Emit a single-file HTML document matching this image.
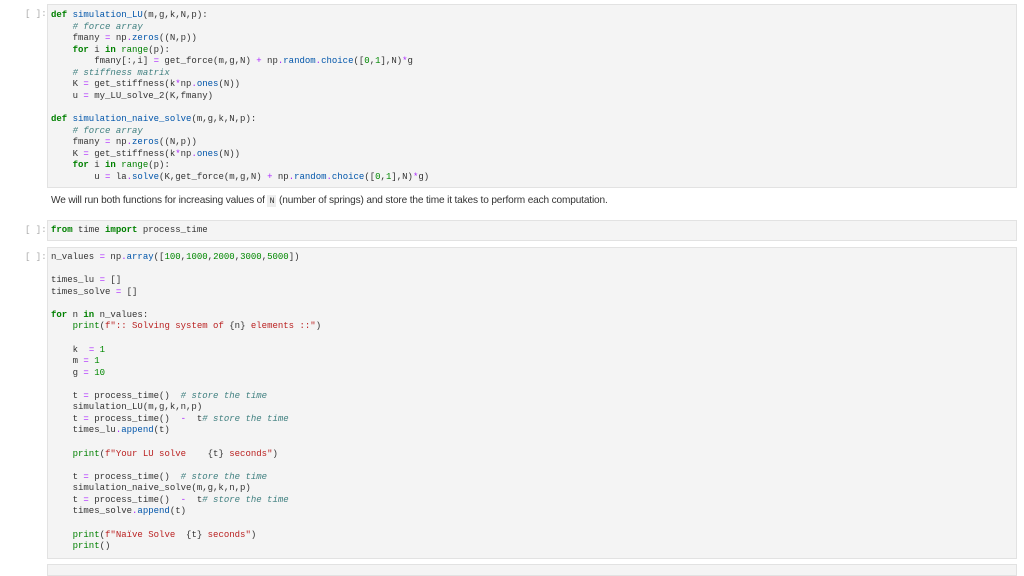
<!DOCTYPE html>
<html><head><meta charset="utf-8"><style>
body{margin:0;width:1024px;height:566px;background:#fff;position:relative;overflow:hidden;font-family:"Liberation Sans",sans-serif}
.cell{position:absolute;left:47px;width:968px;background:#f4f4f4;border:1px solid #e2e2e2}
.pr{position:absolute;left:25px;font:9px/11.57px "Liberation Mono",monospace;color:#aaa}
pre{margin:0;position:absolute;left:3px;font:9px/11.57px "Liberation Mono",monospace;color:#333}
.k{color:#008000;font-weight:bold}.c{color:#408080;font-style:italic}.o{color:#aa22ff}.p{color:#0055aa}.s{color:#ba2121}.n{color:#008800}.b{color:#008000}
.md{position:absolute;left:51px;top:195px;font-size:10.1px;color:#333;letter-spacing:-0.15px}
.md code{font:8.5px "Liberation Mono",monospace;background:#eee;padding:1px 2px}
</style></head><body>
<div class="pr" style="top:9px">[ ]:</div>
<div class="cell" style="top:4px;height:182px"><pre style="top:5px"><span class="k">def</span> <span class="p">simulation_LU</span>(m,g,k,N,p):
    <span class="c"># force array</span>
    fmany <span class="o">=</span> np<span class="o">.</span><span class="p">zeros</span>((N,p))
    <span class="k">for</span> i <span class="k">in</span> <span class="b">range</span>(p):
        fmany[:,i] <span class="o">=</span> get_force(m,g,N) <span class="o">+</span> np<span class="o">.</span><span class="p">random</span><span class="o">.</span><span class="p">choice</span>([<span class="n">0</span>,<span class="n">1</span>],N)<span class="o">*</span>g
    <span class="c"># stiffness matrix</span>
    K <span class="o">=</span> get_stiffness(k<span class="o">*</span>np<span class="o">.</span><span class="p">ones</span>(N))
    u <span class="o">=</span> my_LU_solve_2(K,fmany)

<span class="k">def</span> <span class="p">simulation_naive_solve</span>(m,g,k,N,p):
    <span class="c"># force array</span>
    fmany <span class="o">=</span> np<span class="o">.</span><span class="p">zeros</span>((N,p))
    K <span class="o">=</span> get_stiffness(k<span class="o">*</span>np<span class="o">.</span><span class="p">ones</span>(N))
    <span class="k">for</span> i <span class="k">in</span> <span class="b">range</span>(p):
        u <span class="o">=</span> la<span class="o">.</span><span class="p">solve</span>(K,get_force(m,g,N) <span class="o">+</span> np<span class="o">.</span><span class="p">random</span><span class="o">.</span><span class="p">choice</span>([<span class="n">0</span>,<span class="n">1</span>],N)<span class="o">*</span>g)</pre></div>
<div class="md">We will run both functions for increasing values of <code>N</code> (number of springs) and store the time it takes to perform each computation.</div>
<div class="pr" style="top:225px">[ ]:</div>
<div class="cell" style="top:220px;height:19px"><pre style="top:4px"><span class="k">from</span> time <span class="k">import</span> process_time</pre></div>
<div class="pr" style="top:252px">[ ]:</div>
<div class="cell" style="top:247px;height:310px"><pre style="top:4px">n_values <span class="o">=</span> np<span class="o">.</span><span class="p">array</span>([<span class="n">100</span>,<span class="n">1000</span>,<span class="n">2000</span>,<span class="n">3000</span>,<span class="n">5000</span>])

times_lu <span class="o">=</span> []
times_solve <span class="o">=</span> []

<span class="k">for</span> n <span class="k">in</span> n_values:
    <span class="b">print</span>(<span class="s">f":: Solving system of </span>{n}<span class="s"> elements ::"</span>)

    k  <span class="o">=</span> <span class="n">1</span>
    m <span class="o">=</span> <span class="n">1</span>
    g <span class="o">=</span> <span class="n">10</span>

    t <span class="o">=</span> process_time()  <span class="c"># store the time</span>
    simulation_LU(m,g,k,n,p)
    t <span class="o">=</span> process_time()  <span class="o">-</span>  t<span class="c"># store the time</span>
    times_lu<span class="o">.</span><span class="p">append</span>(t)

    <span class="b">print</span>(<span class="s">f"Your LU solve    </span>{t}<span class="s"> seconds"</span>)

    t <span class="o">=</span> process_time()  <span class="c"># store the time</span>
    simulation_naive_solve(m,g,k,n,p)
    t <span class="o">=</span> process_time()  <span class="o">-</span>  t<span class="c"># store the time</span>
    times_solve<span class="o">.</span><span class="p">append</span>(t)

    <span class="b">print</span>(<span class="s">f"Naïve Solve  </span>{t}<span class="s"> seconds"</span>)
    <span class="b">print</span>()</pre></div>
<div class="cell" style="top:564px;height:10px"></div>
</body></html>
